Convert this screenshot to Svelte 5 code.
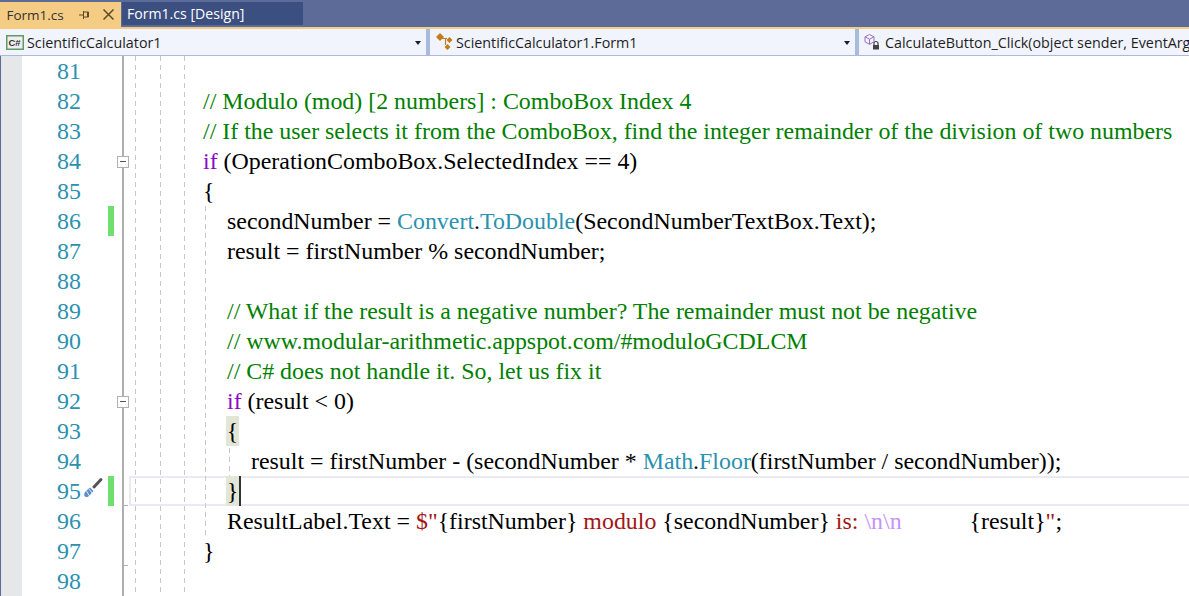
<script>
  const G='c', K='k', T='t', S='s', E='e';
  const rows = [
    {n:81, parts:[]},
    {n:82, l:0, parts:[[G,'// Modulo (mod) [2 numbers] : ComboBox Index 4']]},
    {n:83, l:0, parts:[[G,'// If the user selects it from the ComboBox, find the integer remainder of the division of two numbers']]},
    {n:84, l:0, fold:true, parts:[[K,'if'],['',' (OperationComboBox.SelectedIndex == 4)']]},
    {n:85, l:0, parts:[['','{']]},
    {n:86, l:1, change:true, parts:[['','secondNumber = '],[T,'Convert'],['','.'],[T,'ToDouble'],['','(SecondNumberTextBox.Text);']]},
    {n:87, l:1, parts:[['','result = firstNumber % secondNumber;']]},
    {n:88, parts:[]},
    {n:89, l:1, parts:[[G,'// What if the result is a negative number? The remainder must not be negative']]},
    {n:90, l:1, parts:[[G,'// www.modular-arithmetic.appspot.com/#moduloGCDLCM']]},
    {n:91, l:1, parts:[[G,'// C# does not handle it. So, let us fix it']]},
    {n:92, l:1, fold:true, parts:[[K,'if'],['',' (result < 0)']]},
    {n:93, l:1, brace:'{', parts:[]},
    {n:94, l:2, parts:[['','result = firstNumber - (secondNumber * '],[T,'Math'],['','.'],[T,'Floor'],['','(firstNumber / secondNumber));']]},
    {n:95, l:1, brace:'}', caret:true, change:true, tool:true, current:true, tick:true, parts:[]},
    {n:96, l:1, parts:[['','ResultLabel.Text = '],[S,'$"'],['','{firstNumber}'],[S,' modulo '],['','{secondNumber}'],[S,' is: '],[E,'\\n\\n'],['gap',''],['','{result}'],[S,'"'],['',';']]},
    {n:97, l:0, tick:true, parts:[['','}']]},
    {n:98, parts:[]}
  ];
</script>

<div class="window">
  <div class="tabs">
    <div class="tab active">
      <span>Form1.cs</span>
      <svg class="pin" width="11" height="12" viewBox="0 0 11 12"><path d="M0 6h4M4.500 2v8M4.500 3h5v5h-5M8.500 3v5" fill="none" stroke="#5c4a2a" stroke-width="1"/></svg>
      <svg class="close" width="11" height="11" viewBox="0 0 11 11"><path d="M.5.500l10 10M10.500.500l-10 10" stroke="#5c4a2a" stroke-width="1.500" fill="none"/></svg>
    </div>
    <div class="tab inactive">Form1.cs [Design]</div>
  </div>
  <div class="rule"></div>
  <div class="nav">
    <div class="combo first">
      <svg class="ico" width="18" height="15" viewBox="0 0 18 15"><rect x="0.750" y="0.750" width="16.500" height="13.500" fill="#efefef" stroke="#5f9c63" stroke-width="1.500"/><text x="2.500" y="11" font-size="9.500" font-weight="700" font-family="Liberation Sans" fill="#333">C#</text></svg>
      <span>ScientificCalculator1</span>
      <i class="arrow"></i>
    </div>
    <div class="combo second">
      <svg class="ico" width="18" height="18" viewBox="0 0 18 18"><path d="M4 0L8 4 4 8 0 4zM13.500 4L16.500 7 13.500 10 10.500 7zM11.500 11L14.500 14 11.500 17 8.500 14z" fill="#c27d1c"/><path d="M6 5.500H11M9.500 6V12" stroke="#c27d1c" stroke-width="1.200" fill="none"/></svg>
      <span class="tight">ScientificCalculator1.Form1</span>
      <i class="arrow"></i>
    </div>
    <div class="combo third">
      <svg class="ico" width="18" height="18" viewBox="0 0 18 18"><path d="M5.500 1.500l4.500 2.300v5l-4.500 2.500L1 8.800v-5zM1 3.800l4.500 2.400 4.500-2.400M5.500 6.200v5" fill="none" stroke="#9a6fc0" stroke-width="1"/><path d="M10 12v-1.500a2 2 0 0 1 4 0V12" fill="none" stroke="#424242" stroke-width="1.200"/><rect x="9" y="12" width="6" height="4.500" fill="#424242"/></svg>
      <span>CalculateButton_Click(object sender, EventArg</span>
    </div>
  </div>
  <div class="editor">
    <i class="guide g1"></i><i class="guide g2"></i><i class="guide g3"></i>
    <i class="guide g4"></i><i class="guide g5"></i>
    {#each rows as r}
      <div class="row" class:current={r.current}>
        <div class="strip"></div>
        <div class="num">{r.n}</div>
        <div class="glyph">
          {#if r.tool}
            <svg width="22" height="22" viewBox="0 0 22 22"><path d="M12 10l7-7.500" stroke="#555" stroke-width="3" stroke-linecap="round"/><path d="M3 19.500c-1.500-1.500-1-3.500 1-5.500l4-3.500 3.500 3.500-3.500 4c-2 2-3.500 2.700-5 1.500z" fill="#5b8fc9"/><path d="M4.500 14l3 5M7 12l3 4" stroke="#fff" stroke-width=".8"/></svg>
          {/if}
        </div>
        <div class="bar" class:on={r.change}></div>
        <div class="fold">
          {#if r.fold}<span class="box"><b></b></span>{/if}
          {#if r.tick}<i class="tick"></i>{/if}
        </div>
        <div class="code l{r.l ?? 0}">{#if r.brace}<span class="match">{r.brace}</span>{/if}{#if r.caret}<i class="caret"></i>{/if}{#each r.parts as p}<span class={p[0]}>{p[1]}</span>{/each}</div>
      </div>
    {/each}
  </div>
</div>

<style>
  :global(body){margin:0;background:#fff;overflow:hidden}
  .window{width:1189px;height:596px;overflow:hidden;position:relative;font-family:"Open Sans","Noto Sans",sans-serif;color:#1e1e1e}
  .tabs{height:27px;background:#5d6b99;display:flex;align-items:flex-end}
  .tab{box-sizing:border-box;height:25px;display:flex;align-items:center;white-space:nowrap}
  .tab.active{width:121px;background:#f5cc84;padding-left:6.500px;color:#333;font-size:13.500px}
  .pin{margin-left:15px}
  .close{margin-left:13px}
  .tab.inactive{width:181px;height:23px;margin:0 0 2px 1px;background:#3b4f81;color:#fff;padding-left:5px;font-size:14.100px}
  .rule{height:2px;background:#f5cc84}
  .nav{height:26px;display:flex;background:#f1f4fc;border-bottom:1px solid #a9bbdd}
  .combo{display:flex;align-items:center;font-size:14.300px;position:relative;box-sizing:border-box;white-space:nowrap;overflow:hidden}
  .combo span{margin-left:3px;color:#1e1e1e}
  .combo span.tight{margin-left:2px}
  .ico{flex:none}
  .first{width:430px;padding-left:6px;border-right:4px solid #a9bbdd}
  .second{width:429px;padding-left:6px;border-right:4px solid #a9bbdd}
  .third{flex:1;padding-left:5px}
  .arrow{position:absolute;right:5px;top:12px;border:3.500px solid transparent;border-top:4px solid #1e1e1e;border-bottom:0}
  .editor{position:relative;background:#fff}
  .row{display:flex;height:30px;position:relative}
  .strip{width:21px;margin-left:1px;background:#e6e7e8;flex:none}
  .row::before{content:"";position:absolute;left:0;top:0;bottom:0;width:1px;background:#5d6b99}
  .num{width:59px;flex:none;text-align:right;font:23.900px/30px "Liberation Serif",serif;color:#2b91af}
  .glyph{width:27px;flex:none;position:relative}
  .glyph svg{position:absolute;left:1px;top:1px}
  .bar{width:6px;flex:none}
  .bar.on{background:#6fdf6f}
  .fold{width:8px;flex:none;position:relative;border-right:2px solid #aeaeae}
  .box{position:absolute;left:3px;top:10px;width:10px;height:10px;background:#fff;border:1px solid #b0b0b0;z-index:3}
  .box b{position:absolute;left:2px;top:4px;width:6px;height:1px;background:#555}
  .tick{position:absolute;left:10px;bottom:0;width:4px;height:1px;background:#aeaeae}
  .code{flex:1;font:23.900px/30px "Liberation Serif",serif;color:#000;white-space:pre;position:relative;z-index:2}
  .l0{padding-left:79px}
  .l1{padding-left:103px}
  .l2{padding-left:127px}
  .c{color:#008000}
  .k{color:#8f08c4}
  .t{color:#2b91af}
  .s{color:#a31515}
  .e{color:#c792ff}
  .gap{display:inline-block;width:68px}
  .match{background:#e2e6d6;display:inline-block;height:30px;width:13px;margin-left:-1px;text-align:center;vertical-align:top}
  .caret{display:inline-block;width:2px;height:30px;background:#333;vertical-align:top}
  .current::after{content:"";position:absolute;left:129px;right:-2px;top:0;bottom:0;border:2px solid #eaeaf2;box-sizing:border-box;pointer-events:none}
  .guide{position:absolute;top:0;bottom:0;width:1px;background:repeating-linear-gradient(to bottom,#c8c8c8 0 5px,transparent 5px 9px);z-index:1}
  .g1{left:135px}.g2{left:160px}.g3{left:184px}
  .g4{left:205px;top:150px;bottom:auto;height:330px}
  .g5{left:229px;top:392px;bottom:auto;height:28px}
</style>
